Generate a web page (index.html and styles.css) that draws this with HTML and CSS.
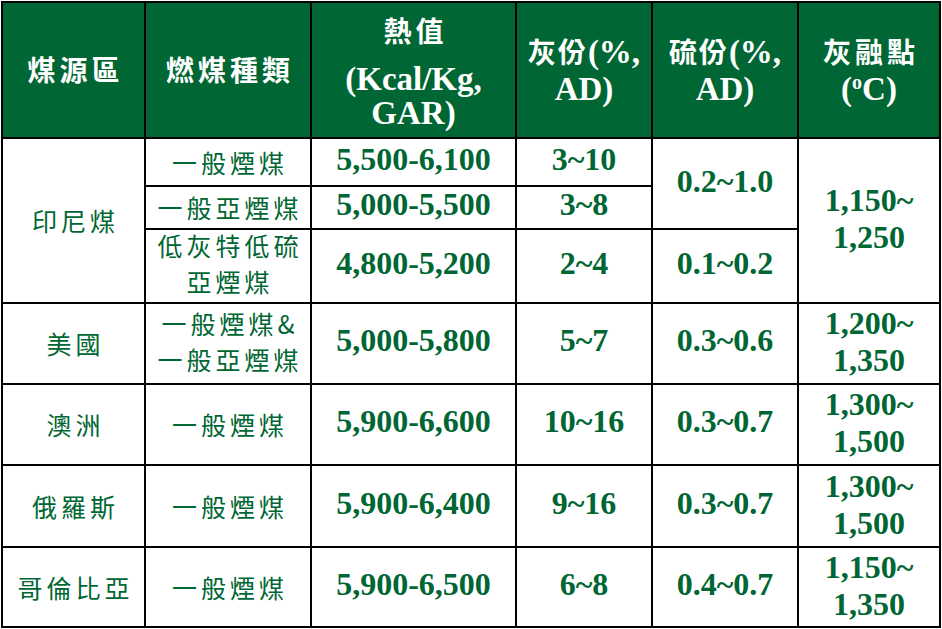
FILE: index.html
```html
<!DOCTYPE html>
<html lang="zh-Hant">
<head>
<meta charset="utf-8">
<title>煤源區</title>
<link rel="stylesheet" href="styles.css">
</head>
<body>
<table class="coal">
  <colgroup>
    <col class="c1"><col class="c2"><col class="c3"><col class="c4"><col class="c5"><col class="c6">
  </colgroup>
  <thead>
    <tr class="r-head">
      <th><span class="hz">煤源區</span></th>
      <th><span class="hz">燃煤種類</span></th>
      <th class="h-heat">
        <div class="l-hz"><span class="hz">熱值</span></div>
        <div class="l-en">(Kcal/Kg,</div>
        <div class="l-en">GAR)</div>
      </th>
      <th class="h-pct">
        <div><span class="hz2">灰份</span>(%,</div>
        <div>AD)</div>
      </th>
      <th class="h-pct">
        <div><span class="hz2">硫份</span>(%,</div>
        <div>AD)</div>
      </th>
      <th class="h-melt">
        <div><span class="hz">灰融點</span></div>
        <div>(<sup>o</sup>C)</div>
      </th>
    </tr>
  </thead>
  <tbody>
    <tr class="r1">
      <td rowspan="3"><span class="zh">印尼煤</span></td>
      <td><span class="zh">一般煙煤</span></td>
      <td class="num">5,500-6,100</td>
      <td class="num">3~10</td>
      <td class="num up" rowspan="2">0.2~1.0</td>
      <td class="num two" rowspan="3">1,150~<br>1,250</td>
    </tr>
    <tr class="r2">
      <td><span class="zh">一般亞煙煤</span></td>
      <td class="num">5,000-5,500</td>
      <td class="num">3~8</td>
    </tr>
    <tr class="r3">
      <td class="zh2"><span class="zh">低灰特低硫</span><br><span class="zh">亞煙煤</span></td>
      <td class="num">4,800-5,200</td>
      <td class="num">2~4</td>
      <td class="num">0.1~0.2</td>
    </tr>
    <tr class="r4">
      <td><span class="zh">美國</span></td>
      <td class="zh2"><span class="zh">一般煙煤&amp;</span><br><span class="zh">一般亞煙煤</span></td>
      <td class="num">5,000-5,800</td>
      <td class="num">5~7</td>
      <td class="num">0.3~0.6</td>
      <td class="num two">1,200~<br>1,350</td>
    </tr>
    <tr class="r5">
      <td><span class="zh">澳洲</span></td>
      <td><span class="zh">一般煙煤</span></td>
      <td class="num">5,900-6,600</td>
      <td class="num">10~16</td>
      <td class="num">0.3~0.7</td>
      <td class="num two">1,300~<br>1,500</td>
    </tr>
    <tr class="r6">
      <td><span class="zh">俄羅斯</span></td>
      <td><span class="zh">一般煙煤</span></td>
      <td class="num">5,900-6,400</td>
      <td class="num">9~16</td>
      <td class="num">0.3~0.7</td>
      <td class="num two">1,300~<br>1,500</td>
    </tr>
    <tr class="r7">
      <td><span class="zh">哥倫比亞</span></td>
      <td><span class="zh">一般煙煤</span></td>
      <td class="num">5,900-6,500</td>
      <td class="num">6~8</td>
      <td class="num">0.4~0.7</td>
      <td class="num two">1,150~<br>1,350</td>
    </tr>
  </tbody>
</table>
</body>
</html>
```
FILE: styles.css
```css
html, body {
  margin: 0;
  background: #ffffff;
}
body {
  padding: 1px 0 0 1px;
}
.coal {
  border-collapse: collapse;
  table-layout: fixed;
  width: 940px;
  color: #006633;
  font-family: "Liberation Serif", "Noto Sans CJK TC", serif;
}
.c1 { width: 143px; }
.c2 { width: 166px; }
.c3 { width: 205px; }
.c4 { width: 136px; }
.c5 { width: 146px; }
.c6 { width: 142px; }

.coal th,
.coal td {
  border: 2px solid #000000;
  padding: 0;
  text-align: center;
  vertical-align: middle;
}
.coal th {
  background: #006633;
  color: #ffffff;
  font-weight: 700;
  font-size: 33px;
  line-height: 37px;
}
.r-head { height: 136px; }
.r1 { height: 48px; }
.r2 { height: 43px; }
.r3 { height: 73px; }
.r4 { height: 81px; }
.r5 { height: 81px; }
.r6 { height: 82px; }
.r7 { height: 80px; }

.hz {
  font-family: "Noto Sans CJK TC", sans-serif;
  font-size: 28px;
  font-weight: 700;
  letter-spacing: 4px;
  margin-right: -4px;
}
.hz2 {
  font-family: "Noto Sans CJK TC", sans-serif;
  font-size: 28px;
  font-weight: 700;
  letter-spacing: 2px;
}
.h-heat .l-hz {
  line-height: 40px;
  margin-bottom: 11px;
}
.h-heat .l-en {
  line-height: 34px;
}
.h-melt {
  line-height: 49px;
}
.h-melt sup {
  font-size: 20px;
  line-height: 0;
  vertical-align: 11px;
}

.zh {
  font-family: "Noto Sans CJK TC", sans-serif;
  font-size: 25px;
  font-weight: 400;
  letter-spacing: 4px;
  margin-right: -4px;
  line-height: 31px;
}
.zh2 {
  line-height: 31px;
}
.coal td.num {
  font-family: "Liberation Serif", serif;
  font-weight: 700;
  font-size: 32px;
  line-height: 32px;
  padding-bottom: 7px;
}
.coal td.num.two {
  line-height: 37px;
  padding-bottom: 3px;
}
.coal td.num.up {
  padding-bottom: 6px;
}
```
